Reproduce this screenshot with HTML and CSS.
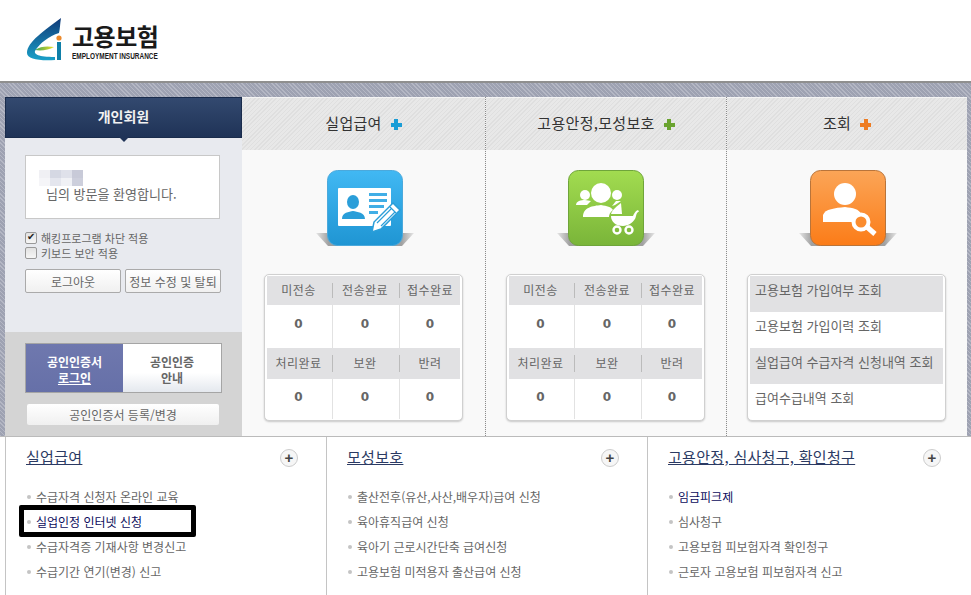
FILE: index.html
```html
<!DOCTYPE html>
<html lang="ko">
<head>
    <meta charset="UTF-8">
    <title>고용보험</title>
    <link rel="stylesheet" href="styles.css">
</head>
<body>
    <div class="header">
        <svg class="logo-mark" width="38" height="44" viewBox="0 0 38 44">
            <defs>
                <linearGradient id="sail" x1="0" y1="0" x2="0" y2="1">
                    <stop offset="0" stop-color="#123a78"/>
                    <stop offset="1" stop-color="#19a0c8"/>
                </linearGradient>
                <linearGradient id="dash" x1="0" y1="0" x2="1" y2="0">
                    <stop offset="0" stop-color="#3fa45a"/>
                    <stop offset="1" stop-color="#f0e020"/>
                </linearGradient>
            </defs>
            <path d="M34 0 C33 6 33 11 32 15 C22 18 13 25 8 33 C7 36 11 39 28 39 L28 42 C12 43 0 41 0 35 C0 24 18 12 34 0 Z" fill="url(#sail)"/>
            <path d="M8 32 C13 28 21 28 27 29 C22 32 14 33 8 32 Z" fill="url(#dash)"/>
            <circle cx="32" cy="20" r="2.6" fill="#ec8a2c"/>
            <rect x="30" y="24" width="4" height="18" fill="#0f7fa8"/>
        </svg>
        <div class="logo-text">
            <div class="logo-ko">고용보험</div>
            <div class="logo-en">EMPLOYMENT INSURANCE</div>
        </div>
    </div>

    <div class="main">
        <div class="member">
            <div class="member-tab">개인회원</div>
            <div class="member-top">
                <div class="welcome">
                    <svg class="blur-name" width="44" height="16" viewBox="0 0 44 16">
                        <rect x="0" y="0" width="11" height="8" fill="#f0f0f4"/>
                        <rect x="11" y="0" width="11" height="8" fill="#d5d8e3"/>
                        <rect x="22" y="0" width="11" height="8" fill="#dfe1ea"/>
                        <rect x="33" y="0" width="11" height="8" fill="#c8cad8"/>
                        <rect x="0" y="8" width="11" height="8" fill="#f5f5f8"/>
                        <rect x="11" y="8" width="11" height="8" fill="#e4e6ee"/>
                        <rect x="22" y="8" width="11" height="8" fill="#f0f1f5"/>
                        <rect x="33" y="8" width="11" height="8" fill="#cdcfdc"/>
                    </svg>
                    <div class="welcome-text">님의 방문을 환영합니다.</div>
                </div>
                <label class="check"><input type="checkbox" checked> 해킹프로그램 차단 적용</label>
                <label class="check"><input type="checkbox"> 키보드 보안 적용</label>
                <div class="btn-row">
                    <button class="btn logout">로그아웃</button>
                    <button class="btn edit">정보 수정 및 탈퇴</button>
                </div>
            </div>
            <div class="member-bottom">
                <div class="cert-tabs">
                    <div class="cert-tab on">공인인증서<br><u>로그인</u></div>
                    <div class="cert-tab">공인인증<br>안내</div>
                </div>
                <button class="btn cert-btn">공인인증서 등록/변경</button>
            </div>
        </div>

        <div class="col col-1">
            <div class="col-head">실업급여<span class="plus blue"></span></div>
            <div class="col-body">
                <svg class="icon" width="98" height="78" viewBox="0 0 98 78">
                    <defs>
                        <linearGradient id="blueBg" x1="0" y1="0" x2="0" y2="1">
                            <stop offset="0" stop-color="#41b8f3"/>
                            <stop offset="1" stop-color="#1f95d3"/>
                        </linearGradient>
                        <linearGradient id="shadow" x1="0" y1="0" x2="1" y2="0">
                            <stop offset="0" stop-color="#e6e6e6"/>
                            <stop offset="0.13" stop-color="#a0a0a0"/>
                            <stop offset="0.87" stop-color="#a0a0a0"/>
                            <stop offset="1" stop-color="#e6e6e6"/>
                        </linearGradient>
                    </defs>
                    <polygon points="0,63 98,63 86,76 12,76" fill="url(#shadow)"/>
                    <rect x="11.5" y="0.5" width="75" height="75" rx="10" fill="url(#blueBg)" stroke="#4ba9dc"/>
                    <rect x="22" y="18" width="53" height="38" rx="1" fill="#fff"/>
                    <ellipse cx="37" cy="32" rx="6" ry="7" fill="#2a9ed9"/>
                    <path d="M26 49 C26 42 33 42 37 41 C41 42 49 42 49 49 Z" fill="#2a9ed9"/>
                    <rect x="53" y="23" width="18" height="3" fill="#41aee6"/>
                    <rect x="53" y="29" width="18" height="3" fill="#41aee6"/>
                    <rect x="53" y="35" width="15" height="3" fill="#41aee6"/>
                    <rect x="53" y="41" width="9" height="3" fill="#41aee6"/>
                    <path d="M56 62 L58 52 L77 33 L84 40 L65 59 Z" fill="#fff" stroke="#2a9ed9" stroke-width="1.5"/>
                    <path d="M61 53 L75 39 M65 56 L79 42 M74 37 L80 43" stroke="#2a9ed9" stroke-width="1.2" fill="none"/>
                </svg>
                <div class="card">
                    <div class="stat-grid">
                        <div class="stat-head">미전송</div><div class="stat-head">전송완료</div><div class="stat-head">접수완료</div>
                        <div class="stat-val">0</div><div class="stat-val">0</div><div class="stat-val">0</div>
                        <div class="stat-head">처리완료</div><div class="stat-head">보완</div><div class="stat-head">반려</div>
                        <div class="stat-val">0</div><div class="stat-val">0</div><div class="stat-val">0</div>
                    </div>
                </div>
            </div>
        </div>

        <div class="col col-2">
            <div class="col-head">고용안정,모성보호<span class="plus green"></span></div>
            <div class="col-body">
                <svg class="icon" width="98" height="78" viewBox="0 0 98 78">
                    <defs>
                        <linearGradient id="greenBg" x1="0" y1="0" x2="0" y2="1">
                            <stop offset="0" stop-color="#a2dc50"/>
                            <stop offset="1" stop-color="#7ab539"/>
                        </linearGradient>
                    </defs>
                    <polygon points="0,63 98,63 86,76 12,76" fill="url(#shadow)"/>
                    <rect x="11.5" y="0.5" width="75" height="75" rx="10" fill="url(#greenBg)" stroke="#6fa53a"/>
                    <circle cx="44" cy="23" r="10" fill="#fff"/>
                    <path d="M26 47 C26 37 36 36 44 35 C50 36 54 37 56 40 C53 42 52 45 52 47 Z" fill="#fff"/>
                    <circle cx="28" cy="25" r="5" fill="#fff"/>
                    <path d="M19 35 C19 31 24 30 28 30 L34 31 L30 35 Z" fill="#fff"/>
                    <circle cx="60" cy="25" r="5" fill="#fff"/>
                    <path d="M55 36 L59 31 L64 31 L58 35 Z" fill="#fff"/>
                    <path d="M54 44 C55 40 60 36 64 33 L65 44 Z" fill="#fff"/>
                    <path d="M54 46 H76 C77 44 78 41 81 40 L82 41.5 C80 42 79.5 44 79 46 C78 52 71 56 66 56 C59 56 54 52 54 46 Z" fill="#fff"/>
                    <circle cx="60" cy="60" r="3.5" fill="none" stroke="#fff" stroke-width="2.4"/>
                    <circle cx="72" cy="60" r="3.5" fill="none" stroke="#fff" stroke-width="2.4"/>
                </svg>
                <div class="card">
                    <div class="stat-grid">
                        <div class="stat-head">미전송</div><div class="stat-head">전송완료</div><div class="stat-head">접수완료</div>
                        <div class="stat-val">0</div><div class="stat-val">0</div><div class="stat-val">0</div>
                        <div class="stat-head">처리완료</div><div class="stat-head">보완</div><div class="stat-head">반려</div>
                        <div class="stat-val">0</div><div class="stat-val">0</div><div class="stat-val">0</div>
                    </div>
                </div>
            </div>
        </div>

        <div class="col col-3">
            <div class="col-head">조회<span class="plus orange"></span></div>
            <div class="col-body">
                <svg class="icon" width="98" height="78" viewBox="0 0 98 78">
                    <defs>
                        <linearGradient id="orangeBg" x1="0" y1="0" x2="0" y2="1">
                            <stop offset="0" stop-color="#fba557"/>
                            <stop offset="1" stop-color="#fb7c18"/>
                        </linearGradient>
                    </defs>
                    <polygon points="0,63 98,63 86,76 12,76" fill="url(#shadow)"/>
                    <rect x="11.5" y="0.5" width="75" height="75" rx="10" fill="url(#orangeBg)" stroke="#b9743a"/>
                    <circle cx="46" cy="24" r="11" fill="#fff"/>
                    <path d="M24 52 V45 C26 39 36 38 46 37 C54 38 60 39 62 44 L55 52 Z" fill="#fff"/>
                    <circle cx="62" cy="52" r="7.5" fill="#fb8c2e" stroke="#fff" stroke-width="4"/>
                    <path d="M68 57 L76 64" stroke="#fff" stroke-width="5"/>
                </svg>
                <div class="card">
                    <div class="query-row">고용보험 가입여부 조회</div>
                    <div class="query-row">고용보험 가입이력 조회</div>
                    <div class="query-row">실업급여 수급자격 신청내역 조회</div>
                    <div class="query-row">급여수급내역 조회</div>
                </div>
            </div>
        </div>
    </div>

    <div class="lower">
        <div class="section">
            <div class="sec-head"><a class="sec-title">실업급여</a><span class="more">+</span></div>
            <ul class="links">
                <li>수급자격 신청자 온라인 교육</li>
                <li class="active">실업인정 인터넷 신청</li>
                <li>수급자격증 기재사항 변경신고</li>
                <li>수급기간 연기(변경) 신고</li>
            </ul>
            <div class="mark"></div>
        </div>
        <div class="section">
            <div class="sec-head"><a class="sec-title">모성보호</a><span class="more">+</span></div>
            <ul class="links">
                <li>출산전후(유산,사산,배우자)급여 신청</li>
                <li>육아휴직급여 신청</li>
                <li>육아기 근로시간단축 급여신청</li>
                <li>고용보험 미적용자 출산급여 신청</li>
            </ul>
        </div>
        <div class="section">
            <div class="sec-head"><a class="sec-title">고용안정, 심사청구, 확인청구</a><span class="more">+</span></div>
            <ul class="links">
                <li class="active">임금피크제</li>
                <li>심사청구</li>
                <li>고용보험 피보험자격 확인청구</li>
                <li>근로자 고용보험 피보험자격 신고</li>
            </ul>
        </div>
    </div>
</body>
</html>
```

FILE: styles.css
```css
html, body {
    margin: 0;
    padding: 0;
}

body {
    width: 971px;
    height: 595px;
    overflow: hidden;
    background: #fff;
    font-family: "Noto Sans CJK KR", "Liberation Sans", sans-serif;
    font-size: 12px;
    color: #666;
}

.header {
    height: 83px;
    padding-left: 27px;
    display: flex;
    align-items: flex-start;
    gap: 7px;
    box-sizing: border-box;
    background: #fff;
    border-bottom: 2px solid #8f8f8f;
}

.logo-mark {
    margin-top: 18px;
}

.logo-text {
    margin-top: 22px;
    color: #1a1a1a;
}

.logo-ko {
    font-size: 24px;
    font-weight: 700;
    line-height: 28px;
    letter-spacing: -0.5px;
}

.logo-en {
    font-family: "Liberation Sans", sans-serif;
    font-size: 9.5px;
    font-weight: 700;
    line-height: 10px;
    margin-top: 1px;
    white-space: nowrap;
    transform: scaleX(0.68);
    transform-origin: left center;
}

.main {
    display: flex;
    height: 353px;
    box-sizing: border-box;
    padding: 14px 4px 0 5px;
    background-color: #a6aaba;
    background-image: repeating-linear-gradient(45deg, #b4b7c4 0 1px, #9ea2b2 1px 3px);
}

.member {
    width: 237px;
    display: flex;
    flex-direction: column;
}

.member-tab {
    height: 41px;
    position: relative;
    box-sizing: border-box;
    background: linear-gradient(#33496f, #1f3357);
    border: 1px solid #1a2c4c;
    color: #f2f2f2;
    font-size: 14px;
    font-weight: 700;
    line-height: 36px;
    text-align: center;
}

.member-tab::after {
    content: "";
    position: absolute;
    left: 113px;
    top: 39px;
    border: 5px solid transparent;
    border-top-color: #1f3357;
}

.member-top {
    height: 194px;
    box-sizing: border-box;
    padding: 17px 20px 0;
    background: #e8eaef;
}

.welcome {
    width: 195px;
    height: 64px;
    box-sizing: border-box;
    padding: 14px 0 0 13px;
    background: #fff;
    border: 1px solid #c8c8c8;
    margin-bottom: 11px;
}

.blur-name {
    display: block;
}

.welcome-text {
    margin: 0 0 0 7px;
    font-size: 13px;
    line-height: 15px;
    color: #666;
}

.check {
    display: flex;
    align-items: center;
    height: 15px;
    gap: 4px;
    color: #666;
    font-size: 11px;
}

.check input {
    appearance: none;
    box-sizing: border-box;
    margin: 0;
    width: 12px;
    height: 12px;
    border: 1px solid #999;
    border-radius: 2px;
    background: linear-gradient(#e2e2e2, #f6f6f6);
    position: relative;
}

.check input:checked::after {
    content: "✔";
    position: absolute;
    left: 1px;
    top: -3px;
    font-size: 10px;
    line-height: 14px;
    color: #222;
}

.btn {
    font-family: inherit;
    font-size: 12px;
    color: #666;
    background: linear-gradient(#fff, #f0f0f0);
    border: 1px solid #aaa;
    border-radius: 2px;
    padding: 0;
}

.btn-row {
    display: flex;
    gap: 4px;
    margin-top: 9px;
}

.logout {
    width: 96px;
    height: 24px;
}

.edit {
    width: 96px;
    height: 24px;
    white-space: nowrap;
}

.member-bottom {
    flex: 1;
    box-sizing: border-box;
    padding: 11px 20px 0;
    background: #d4d4d4;
}

.cert-tabs {
    display: flex;
    width: 197px;
    height: 50px;
    box-sizing: border-box;
    border: 1px solid #a5a5a5;
    margin-bottom: 11px;
}

.cert-tab {
    flex: 1;
    box-sizing: border-box;
    padding-top: 10px;
    text-align: center;
    line-height: 16px;
    font-weight: 700;
    color: #666;
    background: linear-gradient(#fff 60%, #e4e8ee);
}

.cert-tab.on {
    flex: 0 0 97px;
    color: #fff;
    background: linear-gradient(#6f78ae, #6670a8);
}

.cert-btn {
    display: block;
    width: 192px;
    height: 21px;
    margin-left: 2px;
    border: 0;
}

.col {
    display: flex;
    flex-direction: column;
    box-sizing: border-box;
    background: #f4f4f4;
    border-right: 1px dotted #8c8c8c;
}

.col-1 {
    width: 244px;
}

.col-2 {
    width: 241px;
}

.col-3 {
    width: 240px;
    border-right: 0;
}

.col-head {
    height: 52px;
    margin-top: 1px;
    box-sizing: border-box;
    background-color: #e6e6e6;
    background-image: repeating-linear-gradient(135deg, #dfdfdf 0 1px, #e8e8e8 1px 3px);
    color: #333;
    font-size: 15px;
    letter-spacing: 0.3px;
    line-height: 50px;
    text-align: center;
}

.plus {
    display: inline-block;
    width: 11px;
    height: 11px;
    margin-left: 9px;
    vertical-align: -1px;
}

.blue {
    background: linear-gradient(#1a9dd6, #1a9dd6) center / 4px 100% no-repeat,
        linear-gradient(#1a9dd6, #1a9dd6) center / 100% 4px no-repeat;
}

.green {
    background: linear-gradient(#6aa32f, #6aa32f) center / 4px 100% no-repeat,
        linear-gradient(#6aa32f, #6aa32f) center / 100% 4px no-repeat;
}

.orange {
    background: linear-gradient(#ee7c22, #ee7c22) center / 4px 100% no-repeat,
        linear-gradient(#ee7c22, #ee7c22) center / 100% 4px no-repeat;
}

.col-body {
    flex: 1;
    background: #f9f9f9;
    display: flex;
    flex-direction: column;
    align-items: center;
    padding-top: 20px;
}

.col-2 .col-body, .col-3 .col-body {
    padding-right: 1px;
}

.icon {
    display: block;
    margin: 0 0 26px 2px;
}

.col-2 .icon {
    margin-left: 1px;
}

.card {
    width: 199px;
    height: 147px;
    box-sizing: border-box;
    padding: 1px 2px 1px;
    background: #fff;
    border: 1px solid #d0d0d0;
    border-radius: 5px;
    box-shadow: 0 1px 2px rgba(0, 0, 0, 0.2);
}

.stat-grid {
    display: grid;
    grid-template-columns: 66px 67px 1fr;
    grid-template-rows: 29px 43px 31px 1fr;
    height: 100%;
}

.stat-head {
    display: flex;
    align-items: center;
    justify-content: center;
    box-sizing: border-box;
    padding: 0 3px 3px 0;
    background: #e1e1e3;
    color: #666;
    letter-spacing: 0.4px;
    white-space: nowrap;
    position: relative;
}

.stat-head:nth-child(6n+3) {
    padding-right: 0;
}

.stat-head:not(:nth-child(6n)):not(:nth-child(6n+3))::after {
    content: "";
    position: absolute;
    right: 0;
    top: 7px;
    bottom: 7px;
    width: 1px;
    background: #bbb;
}

.stat-val {
    display: flex;
    align-items: center;
    justify-content: center;
    box-sizing: border-box;
    padding: 0 2px 5px 0;
    font-family: "DejaVu Sans", sans-serif;
    font-weight: 700;
    font-size: 12px;
    color: #666;
    border-right: 1px solid #e2e2e2;
}

.stat-val:nth-child(6n+0) {
    border-right: 0;
    padding-right: 0;
}

.query-row {
    height: 36px;
    padding: 0 0 10px 5px;
    box-sizing: border-box;
    display: flex;
    align-items: center;
    font-size: 13px;
    color: #666;
}

.query-row:nth-child(odd) {
    background: #e1e1e3;
}

.lower {
    display: flex;
    height: 159px;
    box-sizing: border-box;
    padding-left: 5px;
    border-top: 1px solid #bbb;
}

.section {
    position: relative;
    width: 321px;
    box-sizing: border-box;
    padding: 12px 0 0 20px;
    border-left: 1px solid #c4c4c4;
}

.section:last-child {
    flex: 1;
}

.sec-head {
    display: flex;
    justify-content: space-between;
    align-items: center;
    width: 272px;
    height: 18px;
    margin-bottom: 17px;
}

.section:last-child .sec-head {
    width: 273px;
}

.sec-title {
    margin-top: -4px;
    color: #2b3a63;
    font-size: 15px;
    letter-spacing: 0.3px;
    text-decoration: underline;
}

.more {
    width: 18px;
    height: 18px;
    box-sizing: border-box;
    border: 1px solid #ccc;
    border-radius: 50%;
    background: #f6f6f6;
    color: #444;
    font-family: "Liberation Sans", sans-serif;
    font-size: 15px;
    font-weight: 700;
    line-height: 15px;
    text-align: center;
}

.links {
    list-style: none;
    margin: 0;
    padding: 0;
}

.links li {
    height: 25px;
    line-height: 25px;
    padding-left: 10px;
    position: relative;
    white-space: nowrap;
}

.links li::before {
    content: "";
    position: absolute;
    left: 1px;
    top: 11px;
    width: 4px;
    height: 4px;
    border-radius: 50%;
    background: #c4c4c4;
}

.links .active {
    color: #0b0b5c;
}

/* annotation drawn over the screenshot */
.mark {
    position: absolute;
    left: 13px;
    top: 68px;
    width: 177px;
    height: 32px;
    box-sizing: border-box;
    border: 5px solid #000;
    border-radius: 2px;
}
```
